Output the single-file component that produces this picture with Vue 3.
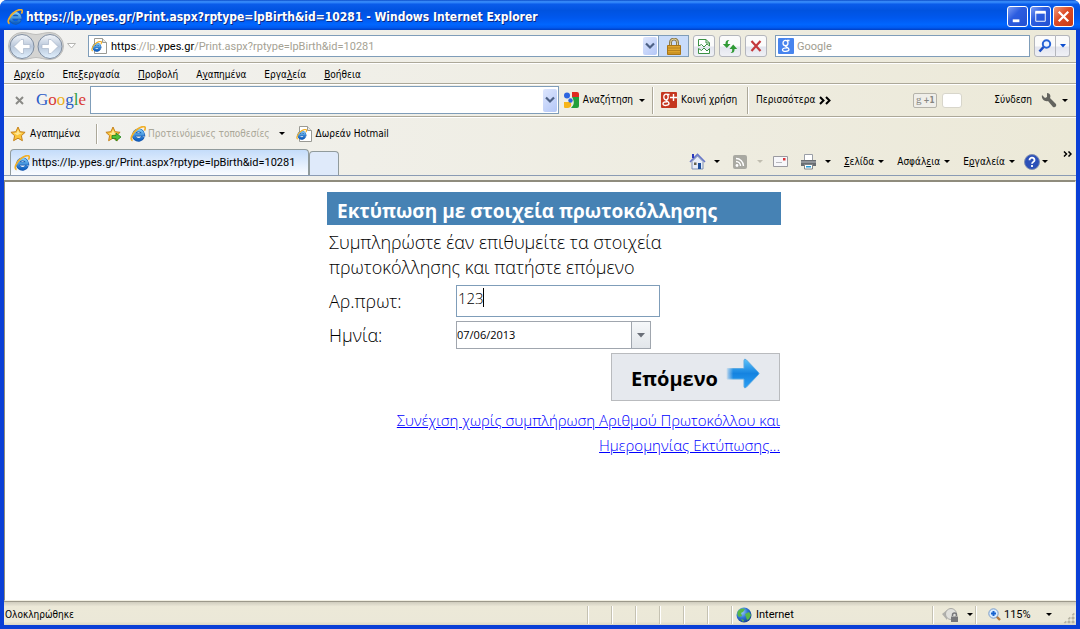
<script setup>
import { ref } from 'vue'

const address = ref('https://lp.ypes.gr/Print.aspx?rptype=lpBirth&id=10281')
const protocol = ref('123')
const date = ref('07/06/2013')
const toolbarQuery = ref('')
const search = ref('')

const menus = [
  ['', 'Α', 'ρχείο'],
  ['Επε', 'ξ', 'εργασία'],
  ['', 'Π', 'ροβολή'],
  ['Α', 'γ', 'απημένα'],
  ['Εργα', 'λ', 'εία'],
  ['', 'Β', 'οήθεια'],
]
const commands = [
  ['', 'Σ', 'ελίδα'],
  ['Ασφάλ', 'ε', 'ια'],
  ['Ε', 'ρ', 'γαλεία'],
]
</script>

<template>
  <div class="window">
    <svg width="0" height="0" class="defs" aria-hidden="true">
      <defs>
        <linearGradient id="ieBlue" x1="0" y1="0" x2="0" y2="1">
          <stop offset="0" stop-color="#7cc8f8" />
          <stop offset="1" stop-color="#1263c4" />
        </linearGradient>
        <linearGradient id="orb" x1="0" y1="0" x2="0" y2="1">
          <stop offset="0" stop-color="#f4f7fb" />
          <stop offset="0.5" stop-color="#b9c7da" />
          <stop offset="1" stop-color="#e2f2ff" />
        </linearGradient>
        <linearGradient id="goArrow" x1="0" y1="0" x2="0" y2="1">
          <stop offset="0" stop-color="#5cc4fb" />
          <stop offset="0.5" stop-color="#1583e0" />
          <stop offset="1" stop-color="#2ba0f5" />
        </linearGradient>
        <linearGradient id="arrowTail" x1="0" y1="0" x2="1" y2="0">
          <stop offset="0" stop-color="#e6e9ee" stop-opacity="0.9" />
          <stop offset="0.4" stop-color="#e6e9ee" stop-opacity="0" />
        </linearGradient>
        <radialGradient id="globe" cx="0.35" cy="0.3" r="0.8">
          <stop offset="0" stop-color="#9fd0ff" />
          <stop offset="0.5" stop-color="#2e72d2" />
          <stop offset="1" stop-color="#123a86" />
        </radialGradient>
        <symbol id="ie" viewBox="0 0 16 16">
          <path d="M13 10.800A4.800 4.800 0 1 1 13.300 8.600H5" fill="none" stroke="#1657ad" stroke-width="3.600" />
          <path d="M12.800 10.800A4.700 4.700 0 1 1 13.200 8.400H5" fill="none" stroke="url(#ieBlue)" stroke-width="2.500" />
          <path d="M2.600 14.600C-.6 13.600 2.400 7.200 6.400 4 10 1 14.600-.4 15.200 1.600c.3 1-.2 2-.8 3" fill="none" stroke="#f0b02c" stroke-width="1.700" />
        </symbol>
        <symbol id="iePage" viewBox="0 0 16 16">
          <path d="M3.500.5h8l4 4v11h-12z" fill="#fff" stroke="#9a9a94" />
          <path d="M11.500.5v4h4" fill="#e8e8e4" stroke="#9a9a94" />
          <use href="#ie" x="0" y="3" width="11" height="11" />
        </symbol>
        <symbol id="star" viewBox="0 0 16 16">
          <path d="M8 1l2.100 4.700 5 .6-3.700 3.400 1 5L8 12.200 3.600 14.700l1-5L.9 6.300l5-.6z" fill="#fbc53a" stroke="#c5811b" />
          <path d="M8 3.500l1.300 3.200 2.900.4-5 2.200-3.200-2.200 2.800-.4z" fill="#ffe795" />
        </symbol>
      </defs>
    </svg>

    <header class="titlebar">
      <svg class="i16"><use href="#ie" /></svg>
      <h1>{{ address }} - Windows Internet Explorer</h1>
      <button class="cap" aria-label="Ελαχιστοποίηση"><svg viewBox="0 0 20 20"><path d="M5 13h7v3H5z" fill="#fff" /></svg></button>
      <button class="cap" aria-label="Μεγιστοποίηση"><svg viewBox="0 0 20 20"><path d="M5 5.500h10V15H5z" fill="none" stroke="#fff" /><path d="M4.500 4h11v3h-11z" fill="#fff" /></svg></button>
      <button class="cap close" aria-label="Κλείσιμο"><svg viewBox="0 0 20 20"><path d="M5 5l10 10M15 5L5 15" stroke="#fff" stroke-width="2.400" /></svg></button>
    </header>

    <div class="frame">
      <div class="bar nav">
        <svg class="orbs" viewBox="0 0 56 28" role="img" aria-label="Πίσω και εμπρός">
          <path d="M14 .5C20 .5 24 2.500 28 2.500S36 .5 42 .5a13.500 13.500 0 0 1 0 27c-6 0-10-2-14-2s-8 2-14 2a13.500 13.500 0 0 1 0-27z" fill="#d4d4d2" stroke="#bdbdbb" />
          <circle cx="14" cy="14.500" r="12" fill="url(#orb)" stroke="#7f8da0" />
          <circle cx="42" cy="14.500" r="12" fill="url(#orb)" stroke="#7f8da0" />
          <path d="M6 14.500l7-7h2.500v5H22v4h-6.500v5H13z" fill="#fff" stroke="#a9b6c8" stroke-width=".7" />
          <path d="M50 14.500l-7-7h-2.500v5H34v4h6.500v5H43z" fill="#fff" stroke="#a9b6c8" stroke-width=".7" />
        </svg>
        <button class="plain hist" aria-label="Ιστορικό"><svg width="9" height="6"><path d="M.5.5h8l-4 4.500z" fill="#fff" stroke="#b5b5b2" /></svg></button>
        <div class="address">
          <svg class="i16"><use href="#iePage" /></svg>
          <a class="url" href="#"><b>https</b>://lp.<b>ypes.gr</b>/Print.aspx?rptype=lpBirth&amp;id=10281</a>
          <button class="drop" aria-label="Διευθύνσεις"><svg width="10" height="8"><path d="M1 1.500l4 4 4-4" fill="none" stroke="#4d6185" stroke-width="2.200" /></svg></button>
          <button class="lock" aria-label="Ασφάλεια"><svg width="14" height="17"><path d="M3.500 8V4.500a3.500 3.500 0 0 1 7 0V8" fill="none" stroke="#8a7a4e" stroke-width="3" /><path d="M3.500 8V4.500a3.500 3.500 0 0 1 7 0V8" fill="none" stroke="#e2d39c" /><path d="M.5 7.500h13v9H.5z" fill="#dfa52c" stroke="#a87518" /><path d="M1 10h12M1 12.500h12M1 15h12" stroke="#b8831d" /></svg></button>
        </div>
        <button class="tool" aria-label="Συμβατότητα"><svg width="12" height="15"><path d="M.5 7V.5H8L11.500 4v3L9 5 6 8 3.500 5.500zM8 .5V4h3.500M.5 9.500v5h11v-5L9 12 6 9l-2.500 2.500z" fill="#fff" stroke="#3c9144" /></svg></button>
        <button class="tool" aria-label="Ανανέωση"><svg width="16" height="15"><path d="M7.500 1C4.500 1 3.500 2 3.500 5H.8l4 4 3.700-4H5.800c0-2 0-3 1.700-4zM8.500 14c3 0 4-1 4-4h2.700l-4-4.500-3.700 4.500h2.700c0 2 0 3-1.700 4z" fill="#2f9a35" /></svg></button>
        <button class="tool" aria-label="Διακοπή"><svg width="12" height="12"><path d="M1.500 1l9 10M10.500 1l-9 10" stroke="#c4393c" stroke-width="2.200" /></svg></button>
        <label class="search">
          <svg class="i16" viewBox="0 0 16 16"><rect width="16" height="16" rx="1" fill="#4784ee" /><ellipse cx="7.500" cy="5" rx="2.500" ry="2.700" fill="none" stroke="#fff" stroke-width="1.300" /><path d="M9 2.500h2.500M7.500 8c0 1 3.500 1.500 3.500 3.500s-6.500 3-6.500.3C4.500 10 7 9.800 9 9.800" fill="none" stroke="#fff" stroke-width="1.300" /></svg>
          <input v-model="search" placeholder="Google" aria-label="Google" />
        </label>
        <div class="go">
          <button aria-label="Εύρεση"><svg width="14" height="14"><circle cx="8.500" cy="5" r="3.700" fill="#eef5ff" stroke="#2663d6" stroke-width="2" /><path d="M5.500 8L1.500 12.500" stroke="#1c4fc4" stroke-width="2.600" /></svg></button>
          <button class="thin" aria-label="Επιλογές"><svg width="6" height="4"><path d="M0 0h6L3 3.500z" fill="#0c4ed0" /></svg></button>
        </div>
      </div>

      <nav class="bar menu">
        <button v-for="m in menus" :key="m.join('')" class="plain">{{ m[0] }}<u>{{ m[1] }}</u>{{ m[2] }}</button>
      </nav>

      <div class="bar google">
        <button class="plain x" aria-label="Κλείσιμο γραμμής"><svg width="9" height="9"><path d="M1 1l7 7M8 1L1 8" stroke="#8a8a86" stroke-width="2" /></svg></button>
        <span class="logo"><i class="b">G</i><i class="r">o</i><i class="y">o</i><i class="b">g</i><i class="g">l</i><i class="r">e</i></span>
        <div class="query">
          <input v-model="toolbarQuery" aria-label="Αναζήτηση Google" />
          <button class="drop" aria-label="Πρόσφατα"><svg width="10" height="8"><path d="M1 1.500l4 4 4-4" fill="none" stroke="#4d6185" stroke-width="2.200" /></svg></button>
        </div>
        <button class="plain item">
          <svg class="i16" viewBox="0 0 16 16"><path d="M9 0h5a2 2 0 0 1 2 2v3H9z" fill="#e02a20" /><path d="M9 5h7v9a2 2 0 0 1-2 2H8c3-3 4-6 1-11z" fill="#23a03c" /><path d="M1 10h6c3 3 0 6-2 6H2c-1 0-1-1-1-2z" fill="#f7b518" /><circle cx="4" cy="3.500" r="3" fill="#2d65e0" /><circle cx="7.500" cy="8.500" r="2.200" fill="#2d65e0" /></svg>
          Αναζήτηση
        </button>
        <span class="tri"></span>
        <span class="sep"></span>
        <button class="plain item">
          <svg class="i16" viewBox="0 0 16 16"><rect width="16" height="16" rx="1" fill="#c5371f" /><ellipse cx="5" cy="5" rx="2.200" ry="2.800" fill="none" stroke="#fff" stroke-width="1.300" /><path d="M6 2.500h2.500M5 8c0 1 3 1.500 3 3.500s-6 3-6 .3C2 10 4 9.800 6 9.800M12.500 2v7M9 5.500h7" fill="none" stroke="#fff" stroke-width="1.400" /></svg>
          Κοινή χρήση
        </button>
        <span class="sep wide"></span>
        <button class="plain item">Περισσότερα <svg width="12" height="9"><path d="M1 1l3.500 3.500L1 8M7 1l3.500 3.500L7 8" fill="none" stroke="#000" stroke-width="2" /></svg></button>
        <span class="plus"><i>g</i>+1</span>
        <span class="bubble"></span>
        <button class="plain signin">Σύνδεση</button>
        <button class="plain" aria-label="Ρυθμίσεις"><svg width="16" height="15"><path d="M1 2l3 3 2-1V0c3 0 4 3 3 5l6 6c1 2-1 4-3 3L7 8C4 9 0 6 1 2z" fill="#63635e" /></svg></button>
        <span class="tri end"></span>
      </div>

      <div class="favs">
        <button class="plain item"><svg class="i16"><use href="#star" /></svg>Αγαπημένα</button>
        <span class="sep"></span>
        <button class="plain" aria-label="Προσθήκη στα αγαπημένα"><svg class="i16" viewBox="0 0 16 16"><use href="#star" /><path d="M7 9.500h4V7l5 4-5 4v-2.500H7z" fill="#4fc13a" stroke="#23801d" stroke-width=".8" /></svg></button>
        <button class="plain item muted"><svg class="i16"><use href="#ie" /></svg>Προτεινόμενες τοποθεσίες<span class="tri"></span></button>
        <button class="plain item"><svg class="i16"><use href="#iePage" /></svg>Δωρεάν Hotmail</button>
      </div>

      <div class="tabs">
        <button class="tab"><svg class="i16"><use href="#ie" /></svg>{{ address }}</button>
        <button class="newtab" aria-label="Νέα καρτέλα"></button>
        <div class="commands">
          <button class="plain" aria-label="Αρχική"><svg width="17" height="17"><path d="M3 8.500V16h11V8.500L8.500 3z" fill="#e7edf8" stroke="#7d8fb4" /><path d="M1 9l7.500-7.500L16 9" fill="none" stroke="#6878c8" stroke-width="1.600" /><path d="M3 1h2v4H3z" fill="#2b39bd" /><path d="M9 10h3v6H9z" fill="#1c4e9c" /><path d="M5 9.500h2.500V12H5z" fill="#65614e" /></svg></button>
          <span class="tri"></span>
          <button class="plain rss" aria-label="Τροφοδοσίες"><svg width="14" height="14"><rect width="14" height="14" rx="2" fill="#a9a9a2" /><circle cx="4" cy="10.500" r="1.400" fill="#fff" /><path d="M3 6.500A4.500 4.500 0 0 1 7.500 11M3 3.500A7.500 7.500 0 0 1 10.500 11" fill="none" stroke="#fff" stroke-width="1.400" /></svg></button>
          <span class="tri pale"></span>
          <button class="plain mail" aria-label="Αλληλογραφία"><svg width="15" height="12"><path d="M.5.5h14v10H.5z" fill="#f7f7fa" stroke="#9a9aa0" /><path d="M10 2h2.500v2.500H10z" fill="#d8343a" /><path d="M3 6.500h6" stroke="#b9b9be" /></svg></button>
          <button class="plain" aria-label="Εκτύπωση"><svg width="17" height="16"><path d="M4.500.5h8V7h-8z" fill="#fff" stroke="#9a9ea6" /><path d="M1 6h15v6H1z" fill="#696d72" /><path d="M1 8h15" stroke="#b8bcc0" /><path d="M4.500 10.500h8V15h-8z" fill="#fff" stroke="#7f8488" /><path d="M6 12h5v1.500H6z" fill="#279bd4" /></svg></button>
          <span class="tri"></span>
          <button v-for="c in commands" :key="c.join('')" class="plain cmd"><span>{{ c[0] }}<u>{{ c[1] }}</u>{{ c[2] }}</span><span class="tri"></span></button>
          <button class="plain help" aria-label="Βοήθεια"><svg width="16" height="16"><circle cx="8" cy="8" r="7.500" fill="#2c50b8" stroke="#8290b2" /><path d="M5.500 6.200c0-3.400 5-3.200 5 0 0 1.600-2.500 1.800-2.500 3.600M8 11v2" fill="none" stroke="#fff" stroke-width="1.800" /></svg><span class="tri"></span></button>
          <button class="plain more" aria-label="Περισσότερες εντολές"><svg width="9" height="6"><path d="M1 .5L3.500 3 1 5.500M5.500.5L8 3 5.500 5.500" fill="none" stroke="#000" stroke-width="1.500" /></svg></button>
        </div>
      </div>

      <main class="page">
        <form class="form" @submit.prevent>
          <h2>Εκτύπωση με στοιχεία πρωτοκόλλησης</h2>
          <p>Συμπληρώστε έαν επιθυμείτε τα στοιχεία πρωτοκόλλησης και πατήστε επόμενο</p>
          <div class="row">
            <label for="protocol">Αρ.πρωτ:</label>
            <div class="field"><input id="protocol" v-model="protocol" /><span class="caret"></span></div>
          </div>
          <div class="row date">
            <label for="date">Ημνία:</label>
            <div class="combo">
              <input id="date" v-model="date" />
              <button type="button" aria-label="Ημερολόγιο"><svg width="8" height="5"><path d="M0 0h8L4 4.500z" fill="#6a6f78" /></svg></button>
            </div>
          </div>
          <button class="next" type="submit">
            <span>Επόμενο</span>
            <svg width="34" height="32" viewBox="0 0 34 32"><path d="M1 10.500h17V2.500q0-2 2-1l12.500 13q1 1 0 2L20 29.500q-2 1-2-1V21H1z" fill="url(#goArrow)" stroke="#5aa9e2" /><path d="M0 9h18v13H0z" fill="url(#arrowTail)" /></svg>
          </button>
          <a class="skip" href="#">Συνέχιση χωρίς συμπλήρωση Αριθμού Πρωτοκόλλου και Ημερομηνίας Εκτύπωσης...</a>
        </form>
      </main>

      <footer class="status">
        <span class="done">Ολοκληρώθηκε</span>
        <span v-for="n in 6" :key="n" class="cell"></span>
        <span class="zone"><svg class="i16" viewBox="0 0 16 16"><circle cx="8" cy="8" r="7.500" fill="url(#globe)" /><path d="M2 4c2-3 6-3 7-2L7 5 5 6l1 3-3 1C1 8 1 6 2 4zM9 7l4-2 2 3-2 4-2 1-1-3zM5 12l3 1-1 2z" fill="#58b848" /></svg>Internet</span>
        <button class="plain prot" aria-label="Προστατευμένη λειτουργία"><svg width="18" height="16"><path d="M0 7l5-4v3h2v4H5v3z" fill="#b0b0ac" /><circle cx="9" cy="7" r="5.500" fill="#e0e0dc" stroke="#aaaaa6" /><path d="M9 9.500h7V15H9z" fill="#77777a" /><path d="M10.500 9V8a2 2 0 0 1 4 0v1" fill="none" stroke="#77777a" stroke-width="1.500" /></svg><span class="tri"></span></button>
        <button class="plain zoom"><svg width="13" height="13"><path d="M8 8l4 4" stroke="#b5793d" stroke-width="2.400" /><circle cx="5.500" cy="5.500" r="4.700" fill="#d9ecff" stroke="#7a9cc9" /><path d="M5.500 3v5M3 5.500h5" stroke="#1763cf" stroke-width="2" /></svg>115%<span class="tri"></span></button>
        <span class="grip"></span>
      </footer>
    </div>
  </div>
</template>

<style>
body { margin: 0; background: #fff; }
</style>

<style scoped>
* { box-sizing: border-box; }
.window {
  --ui: "DejaVu Sans Condensed", "DejaVu Sans", sans-serif;
  --latin: Roboto, sans-serif;
  --page: "Open Sans", "Noto Sans", sans-serif;
  min-height: 100vh;
  display: flex;
  flex-direction: column;
  background: #0a3fd6;
  border-radius: 7px 7px 0 0;
  font: 10px/16px var(--ui);
  color: #000;
}
.defs { position: absolute; }
svg { display: block; flex: none; }
.i16 { width: 16px; height: 16px; }
button, input { font: inherit; color: inherit; }
button { padding: 0; }
input { min-width: 0; border: 0; padding: 0; outline: 0; background: none; }
.plain { border: 0; background: none; white-space: nowrap; display: flex; align-items: center; }
.plain u { text-underline-offset: 1px; }
.menu .plain { display: block; }

.titlebar {
  height: 30px;
  display: flex;
  align-items: center;
  gap: 2px;
  padding: 3px 6px 0 7px;
  border-radius: 7px 7px 0 0;
  background: linear-gradient(#0b4cc8 0, #3d93ff 6%, #0a5cea 14%, #0053e0 35%, #0058ee 60%, #0066ff 82%, #005af0 92%, #003fc4 100%);
}
.titlebar h1 {
  flex: 1;
  margin: 0 0 0 1px;
  padding-top: 1px;
  font: bold 12px/20px var(--ui);
  color: #fff;
  text-shadow: 1px 1px #0a2a86;
  white-space: nowrap;
}
.cap {
  width: 21px;
  height: 21px;
  border: 1px solid #fff;
  border-radius: 3px;
  background: linear-gradient(135deg, #7c9df5, #2c5de0 40%, #2250d2);
}
.cap svg { width: 19px; height: 19px; }
.close { background: linear-gradient(135deg, #f09a7c, #dc4a25 45%, #c83a14); }

.frame {
  flex: 1;
  display: flex;
  flex-direction: column;
  margin: 0 4px 4px;
  background: linear-gradient(90deg, #f2f2f0, #ece9d8);
}
.bar { display: flex; align-items: center; border-bottom: 1px solid #aca899; box-shadow: 0 1px #fff; }
.nav { height: 33px; padding: 0 6px 0 4px; }
.orbs { width: 56px; height: 28px; overflow: visible; }
.hist { margin: 0 12px 0 3px; }
.address, .search, .query { display: flex; align-items: center; height: 22px; background: #fff; border: 1px solid #7f9db9; }
.address { flex: 1; padding-left: 2px; }
.url, .search, .tab, .zone, .zoom { font: 11px/16px var(--latin); }
.url { flex: 1; margin-left: 4px; padding-top: 2px; color: #a5a294; text-decoration: none; white-space: nowrap; }
.url b { font-weight: normal; color: #000; }
.drop {
  width: 14px;
  height: 18px;
  margin-right: 1px;
  border: 0;
  border-radius: 2px;
  background: linear-gradient(135deg, #dde6fd, #b4c7f7);
  display: grid;
  place-items: center;
}
.lock { width: 30px; height: 20px; border: 0; border-left: 1px solid #7f9db9; background: #c9dcfa; display: grid; place-items: center; }
.tool, .go button {
  width: 22px;
  height: 22px;
  margin-left: 4px;
  border: 1px solid #b4b6bc;
  border-radius: 3px;
  background: linear-gradient(#fbfbfb 50%, #e3e5ee 55%, #f0f1f6);
  display: grid;
  place-items: center;
}
.search { width: 255px; margin: 0 4px 0 8px; padding-left: 2px; gap: 3px; }
.search input { flex: 1; padding-top: 2px; }
.search input::placeholder { color: #a09d90; opacity: 1; }
.go { display: flex; }
.go button { margin: 0; border-radius: 3px 0 0 3px; }
.go .thin { width: 14px; border-left: 0; border-radius: 0 3px 3px 0; }

.menu { height: 21px; gap: 18px; padding: 4px 0 0 10px; }
.google { height: 33px; }
.x { margin: 0 12px 0 11px; }
.logo { width: 50px; font: 17px/24px "Liberation Serif", serif; margin-right: 4px; }
.logo i { font-style: normal; }
.b { color: #2a5cc8; }
.r { color: #d93a35; }
.y { color: #edb01c; }
.g { color: #2f9c46; }
.query { flex: 1; height: 28px; margin-right: 4px; }
.query input { flex: 1; height: 24px; }
.query .drop { height: 23px; }
.item { gap: 4px; }
.tri { flex: none; width: 0; height: 0; border: 3px solid transparent; border-top-color: #000; border-bottom: 0; }
.google > .tri { margin-left: 6px; }
.sep { width: 2px; height: 27px; border-left: 1px solid #aca899; border-right: 1px solid #fff; margin: 0 7px; }
.wide { margin-left: 10px; }
.plus {
  width: 24px;
  height: 15px;
  margin-left: 82px;
  border: 1px solid #b5b3aa;
  border-radius: 2px;
  background: #efeee9;
  font: bold 8px/13px var(--ui);
  color: #85857f;
  text-align: center;
}
.plus i { font: 11px/10px "Liberation Serif", serif; margin-right: 2px; }
.bubble { width: 20px; height: 15px; margin-left: 5px; border: 1px solid #d8d6cb; border-radius: 3px; background: #fff; }
.signin { margin: 0 9px 0 32px; }
.google > .end { margin: 0 8px 0 5px; }

.favs { display: flex; align-items: center; height: 31px; padding: 2px 0 0 6px; }
.favs .sep { height: 20px; margin: 0 7px 0 16px; }
.favs .item + .item { margin-left: 11px; }
.favs .muted { margin-left: 9px; color: #aaa798; gap: 2px; }
.muted .tri { margin-left: 7px; }

.tabs { display: flex; align-items: flex-end; height: 28px; border-bottom: 1px solid #8a9bb4; padding-left: 6px; }
.tab, .newtab { border: 1px solid #919b9c; border-bottom: 0; border-radius: 4px 4px 0 0; }
.tab {
  display: flex;
  align-items: center;
  gap: 2px;
  width: 299px;
  height: 26px;
  padding: 1px 0 0 3px;
  background: linear-gradient(#c4dcfa, #fafcff);
  white-space: nowrap;
}
.newtab { width: 30px; height: 24px; background: #dfeafa; }
.commands { align-self: stretch; margin-left: auto; display: flex; align-items: center; }
.commands > .tri { margin-left: 8px; }
.commands .rss { margin-left: 13px; }
.commands .pale { border-top-color: #c0bdb0; margin-left: 10px; }
.mail { margin: 0 12px 0 10px; }
.cmd { margin-left: 13px; gap: 4px; }
.help { margin-left: 9px; gap: 2px; }
.more { align-self: flex-start; margin: 3px 4px 0 15px; }

.page {
  flex: 1;
  margin-top: 4px;
  padding: 10px 0 0 28px;
  border: 1px solid #8f8c7d;
  border-top-width: 2px;
  border-right-color: #f1efe2;
  border-bottom-color: #f1efe2;
  background: #fff;
  font-family: var(--page);
}
.form { width: 454px; margin: 0 auto; font-weight: 300; }
.form h2 { margin: 0; padding: 3px 0 0 10px; height: 33px; background: #4682b4; color: #fff; font: bold 19px/33px var(--page); }
.form p { margin: 5px 0; padding: 0 90px 0 2px; font-size: 18px; line-height: 25px; }
.row { display: flex; align-items: center; padding-left: 2px; height: 32px; }
.row label { width: 127px; font-size: 18px; line-height: 25px; }
.field { position: relative; width: 204px; height: 32px; border: 1px solid #7f9db9; }
.field input { display: block; width: 100%; height: 24px; padding-left: 1px; font-size: 15px; }
.caret { position: absolute; left: 26px; top: 2px; width: 1px; height: 19px; background: #000; }
.date { margin: 4px 0; height: 28px; }
.combo { display: flex; width: 195px; height: 28px; border: 1px solid #a0a6ae; }
.combo input { flex: 1; font-size: 11px; font-weight: 400; }
.combo button { width: 19px; border: 0; border-left: 1px solid #a0a6ae; background: linear-gradient(#f6f8fa, #e2e6ea); display: grid; place-items: center; }
.next {
  display: flex;
  align-items: center;
  justify-content: center;
  gap: 8px;
  width: 169px;
  height: 48px;
  margin: 0 1px 7px auto;
  border: 1px solid #b9bbbe;
  background: #e6e9ee;
  font: bold 20px/28px var(--page);
}
.next span { padding-top: 3px; }
.next svg { margin-bottom: 6px; }
.skip { display: block; text-align: right; color: #00f; font-size: 15px; line-height: 25px; padding-right: 1px; }

.status { display: flex; align-items: center; height: 24px; padding-top: 2px; border-top: 1px solid #9c998b; background: linear-gradient(#cfccbe, #ece9d8 20%, #ebe8d8 85%, #dad6c4); }
.done { flex: 1; padding-left: 1px; }
.cell, .zone, .prot, .zoom { height: 18px; border-left: 1px solid #c5c2b2; box-shadow: inset 1px 0 #fff; }
.cell { width: 24px; }
.zone { display: flex; align-items: center; gap: 4px; width: 201px; padding-left: 4px; }
.prot { width: 43px; padding-left: 9px; gap: 7px; }
.zoom { width: 85px; padding-left: 12px; gap: 3px; }
.zoom .tri { margin-left: auto; margin-right: 8px; }
.grip { width: 12px; height: 12px; margin: 6px 1px 0 3px; background: radial-gradient(circle at 2px 2px, #b5b2a2 1px, transparent 2px) 0 0 / 4px 4px; clip-path: polygon(100% 0, 100% 100%, 0 100%); }
</style>
